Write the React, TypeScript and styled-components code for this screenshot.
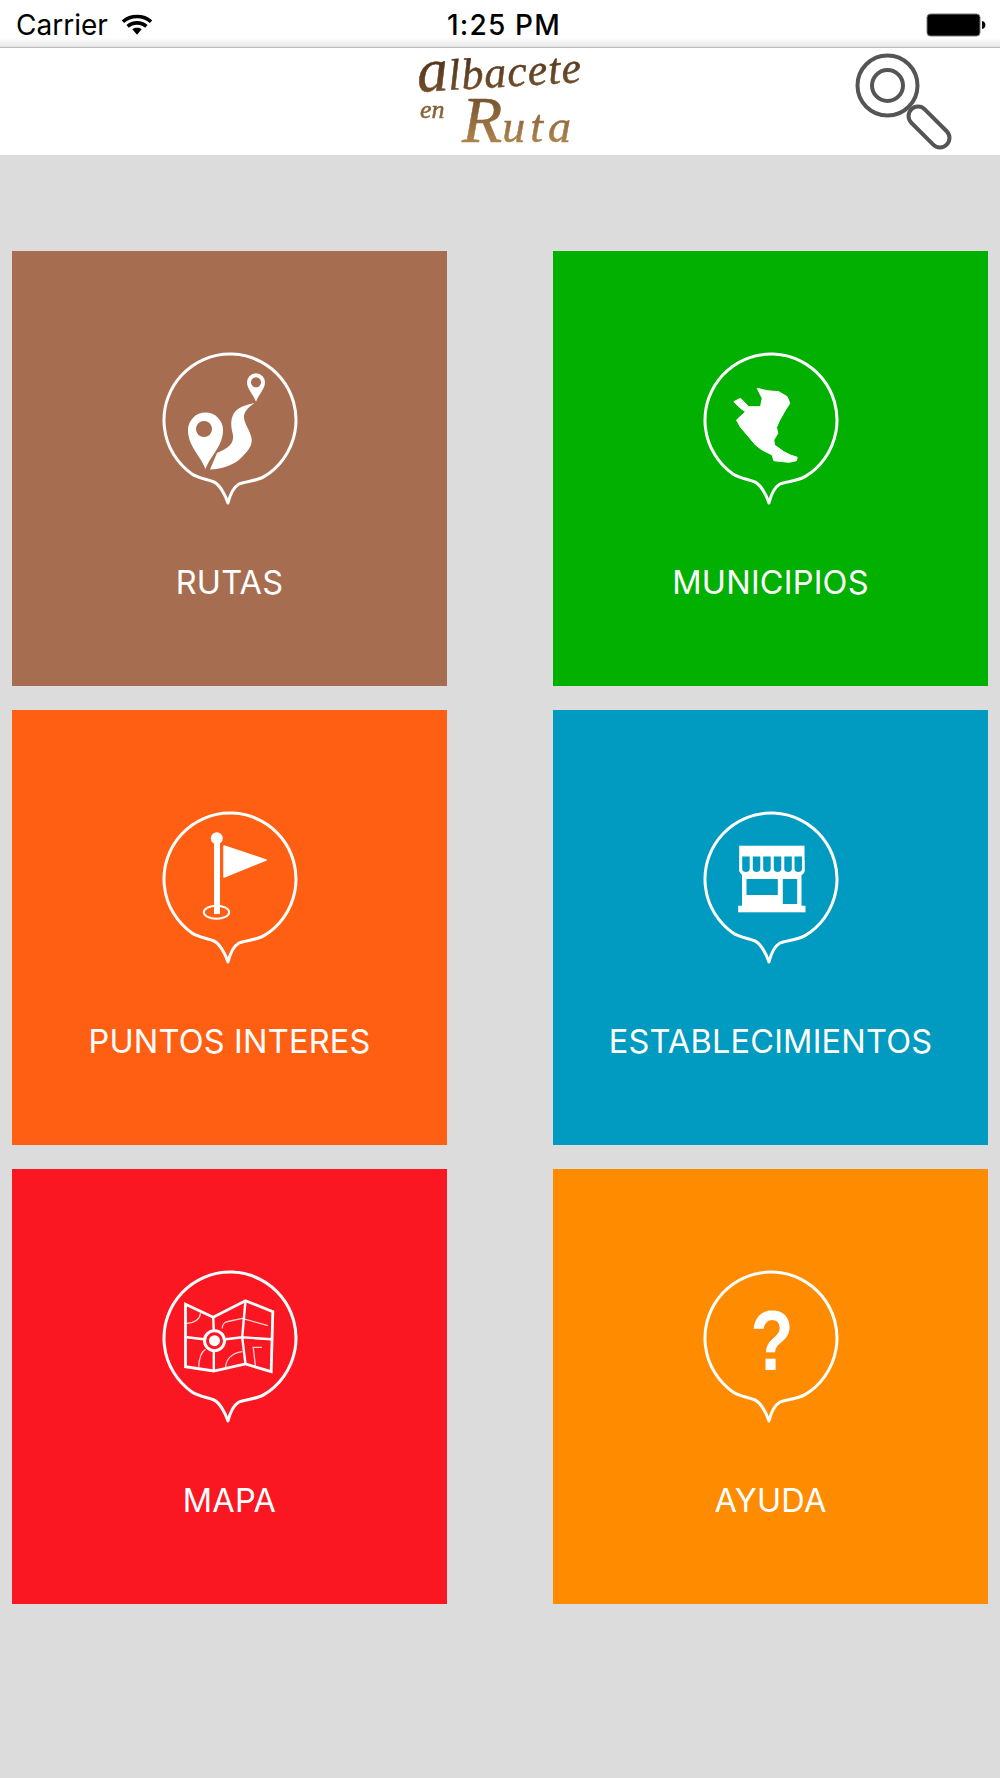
import React from 'react';
import styled, { createGlobalStyle } from 'styled-components';

const GlobalStyle = createGlobalStyle`
  html, body {
    margin: 0;
    padding: 0;
    background: #dcdcdc;
    font-family: Inter, "Liberation Sans", sans-serif;
  }
`;

const Screen = styled.div`
  width: 1000px;
  height: 1778px;
  background: #dcdcdc;
  overflow: hidden;
`;

const StatusBar = styled.div`
  height: 45px;
  display: grid;
  grid-template-columns: 1fr auto 1fr;
  align-items: center;
  padding: 2px 14px 0 16px;
  background: linear-gradient(#fff 0, #fff 38px, #e6e6e6 47px);
  border-bottom: 1px solid #bdbdbd;
  color: #000;
`;

const Carrier = styled.div`
  display: flex;
  align-items: center;
  gap: 14px;
  font-size: 28px;
`;

const Clock = styled.div`
  font-size: 28px;
  font-weight: 500;
  letter-spacing: 1.2px;
  margin-left: 6px;
`;

const BatteryWrap = styled.div`
  justify-self: end;
  line-height: 0;
`;

const Header = styled.header`
  height: 107px;
  background: #fff;
  position: relative;
  display: flex;
  justify-content: center;
`;

const SearchButton = styled.div`
  position: absolute;
  top: 4px;
  right: 47px;
  line-height: 0;
`;

const Soft = styled.svg`
  display: block;
  overflow: visible;
  filter: blur(0.4px);
`;

const Grid = styled.main`
  display: grid;
  grid-template-columns: 435px 435px;
  grid-auto-rows: 435px;
  justify-content: space-between;
  row-gap: 24px;
  padding: 96px 12px 0;
`;

const Tile = styled.div<{ $bg: string }>`
  background: ${(p) => p.$bg};
  display: flex;
  flex-direction: column;
  align-items: center;
  padding-top: 100px;
  color: #fff;
`;

const Label = styled.div`
  margin-top: 57px;
  font-size: 32.5px;
  line-height: 38px;
  letter-spacing: 0.2px;
`;

function Wifi() {
  return (
    <svg width="30" height="24" viewBox="0 0 32 24">
      <path d="M1 8.500C9 1 23 1 31 8.500" fill="none" stroke="#000" strokeWidth="3.800" />
      <path d="M6 13.500C11.500 8.500 20.500 8.500 26 13.500" fill="none" stroke="#000" strokeWidth="3.800" />
      <path d="M11 16.500c3-2 7-2 10 0l-5 6z" fill="#000" />
    </svg>
  );
}

function Battery() {
  return (
    <svg width="60" height="24" viewBox="0 0 60 24">
      <rect x="1" y="1" width="53" height="22" rx="3.500" fill="#000" stroke="#777" strokeWidth="1" />
      <path d="M56 8c2.400 0.400 3.400 2 3.400 4s-1 3.600-3.400 4z" fill="#000" />
    </svg>
  );
}

function Logo() {
  return (
    <Soft width="176" height="107" viewBox="0 0 176 107">
      <defs>
        <linearGradient id="logoInk" gradientUnits="userSpaceOnUse" x1="0" y1="5" x2="0" y2="100">
          <stop offset="0" stopColor="#4a2c15" />
          <stop offset="0.5" stopColor="#7a5530" />
          <stop offset="1" stopColor="#b58a50" />
        </linearGradient>
      </defs>
      <g
        fill="url(#logoInk)"
        stroke="url(#logoInk)"
        strokeWidth="0.5"
        fontFamily="'Liberation Serif', serif"
        fontStyle="italic"
      >
        <text x="6" y="44" transform="rotate(-3.500 6 44)">
          <tspan fontSize="62">a</tspan>
          <tspan fontSize="44" letterSpacing="1">lbacete</tspan>
        </text>
        <text x="8" y="70" fontSize="26">en</text>
        <text x="50" y="94">
          <tspan fontSize="66">R</tspan>
          <tspan fontSize="46" letterSpacing="5">uta</tspan>
        </text>
      </g>
    </Soft>
  );
}

function SearchIcon() {
  return (
    <Soft width="102" height="100" viewBox="0 0 102 100" fill="none" stroke="#555" strokeWidth="4">
      <circle cx="36.500" cy="33.500" r="30" />
      <circle cx="36.500" cy="33.500" r="15.500" />
      <rect x="-25" y="-9.500" width="50" height="19" rx="9.500" transform="translate(78 75) rotate(45)" />
    </Soft>
  );
}

// pin shaped ring shared by all six tiles
function Bubble({ children }: { children: React.ReactNode }) {
  return (
    <Soft width="136" height="156" viewBox="0 0 136 156">
      <path
        d="M66 152C63 143 57 133 52 131C46 128.500 36 127.200 30 123A66 66 0 1 1 102 125.600C94 130.400 82 130.500 77 133C71 136.500 68 144 66 152Z"
        fill="none"
        stroke="#fff"
        strokeWidth="3"
        strokeLinejoin="round"
      />
      {children}
    </Soft>
  );
}

function RouteGlyph() {
  return (
    <g fill="#fff">
      <path
        fillRule="evenodd"
        d="M43.500 118C38 104 26 95 26 79A17.500 17.500 0 0 1 61 79C61 95 49 104 43.500 118ZM42 70a8 8 0 1 0 0.010 0Z"
      />
      <path
        fillRule="evenodd"
        d="M94 50.700C91 43 85 38 85 31.300A9 9 0 0 1 103 31.300C103 38 97 43 94 50.700ZM94 26.300a5 5 0 1 0 0.010 0Z"
      />
      <path d="M92.500 52C84 54 76 56 72 62C68 69 69 76 71 84C72 92 67 97 55 102L48 118.500C60 118 73 114 80 106C89 97 91 92 89 85C87 78 82 72 82 66C82 60 87 56 92.500 52Z" />
    </g>
  );
}

function ProvinceGlyph() {
  return (
    <path
      fill="#fff"
      stroke="#fff"
      strokeWidth="1"
      strokeLinejoin="round"
      d="M54.200 37.300L64.200 39.700L75.800 40.700L84.200 45.700L86.800 52.300L82.500 59L76.800 69L73.500 76.300L74.800 82.300L70.800 89L71.500 94L80.800 100.700L87.500 104L94.200 106.300L93.500 109.700L85.800 111.300L70.800 109.700L69.200 104L59.200 99L52.500 94L44.200 84L37.500 76.300L33.500 69L42.500 60.700L37.500 57.300L30.800 50.700L37.500 47.300L45.800 55.700L57.500 55.700L59.200 47.300Z"
    />
  );
}

function FlagGlyph() {
  return (
    <g fill="#fff">
      <circle cx="54.800" cy="28.300" r="6" />
      <rect x="52" y="30" width="6" height="74" />
      <ellipse cx="54.500" cy="102.300" rx="12.700" ry="6.500" fill="none" stroke="#fff" strokeWidth="2" />
      <path
        d="M62 36L104 50L62 67Z"
        stroke="#fff"
        strokeWidth="1.500"
        strokeLinejoin="round"
      />
    </g>
  );
}

const awningSlots = [39.2, 49.8, 60.2, 70.8, 81.3, 91.5];

function ShopGlyph() {
  return (
    <g>
      <g fill="#fff">
        <rect x="36.200" y="35.700" width="65.300" height="11" />
        <rect x="39" y="60" width="59.500" height="36" />
        <rect x="35.200" y="95.700" width="67.300" height="6.600" />
        <path d="M36.200 46H101.500V60C101.500 65 91 65 90 60H47C46 65 36.200 65 36.200 60Z" />
        {awningSlots.map((x) => (
          <path key={x} d={`M${x - 2.500} 50H${x + 10}V61C${x + 10} 67 ${x - 2.500} 67 ${x - 2.500} 61Z`} />
        ))}
      </g>
      <g fill="#019ac0">
        {awningSlots.map((x) => (
          <path key={x} d={`M${x} 46.500H${x + 7.500}V59C${x + 7.500} 63 ${x} 63 ${x} 59Z`} />
        ))}
        <rect x="43.500" y="69" width="31.300" height="16" />
        <rect x="79.800" y="69" width="14.400" height="25" />
      </g>
    </g>
  );
}

function MapGlyph() {
  return (
    <g fill="none" stroke="#fff">
      <path
        strokeWidth="2.800"
        d="M23.500 35.300L51.200 48.300L83.500 31.700L110.800 42.700L109.200 102.700L83.500 95L51.800 102L23.500 97.700Z"
      />
      <path
        strokeWidth="2.400"
        d="M51.200 48.300L51.800 61M51.800 81L51.800 102M83.500 31.700L80.200 68.300L83.500 95M25 68.300L41.800 70.300M63.500 70.300L80.200 68.300L109.200 70.300"
      />
      <circle cx="52.500" cy="71.700" r="10" strokeWidth="3" />
      <circle cx="52.500" cy="71.700" r="5.500" fill="#fff" stroke="none" />
      <path
        strokeWidth="1.300"
        strokeOpacity="0.8"
        d="M25 54.300C33 54 38 50 38.500 44.300M60 59.300C61 54 63 53 66 52.500L80.200 49.300L105.800 56.700M36.800 97.700C37 90 38 84 43.500 80.300M63.500 98.300C64 90 70 84 80.200 82.700M93.500 97.700L91.200 78.300H100"
      />
    </g>
  );
}

function HelpGlyph() {
  return (
    <text
      x="0"
      y="101"
      fill="#fff"
      textAnchor="middle"
      fontFamily="'Liberation Sans', sans-serif"
      fontSize="86"
      fontWeight="700"
      transform="translate(69 0) scale(0.82 1)"
    >
      ?
    </text>
  );
}

const tiles = [
  { label: 'RUTAS', bg: '#a66d50', glyph: <RouteGlyph /> },
  { label: 'MUNICIPIOS', bg: '#01b000', glyph: <ProvinceGlyph /> },
  { label: 'PUNTOS INTERES', bg: '#ff5f13', glyph: <FlagGlyph /> },
  { label: 'ESTABLECIMIENTOS', bg: '#019ac0', glyph: <ShopGlyph /> },
  { label: 'MAPA', bg: '#fa1722', glyph: <MapGlyph /> },
  { label: 'AYUDA', bg: '#ff8c00', glyph: <HelpGlyph /> },
];

export default function App() {
  return (
    <Screen>
      <GlobalStyle />
      <StatusBar>
        <Carrier>
          Carrier
          <Wifi />
        </Carrier>
        <Clock>1:25 PM</Clock>
        <BatteryWrap>
          <Battery />
        </BatteryWrap>
      </StatusBar>
      <Header>
        <Logo />
        <SearchButton>
          <SearchIcon />
        </SearchButton>
      </Header>
      <Grid>
        {tiles.map((t) => (
          <Tile key={t.label} $bg={t.bg}>
            <Bubble>{t.glyph}</Bubble>
            <Label>{t.label}</Label>
          </Tile>
        ))}
      </Grid>
    </Screen>
  );
}
